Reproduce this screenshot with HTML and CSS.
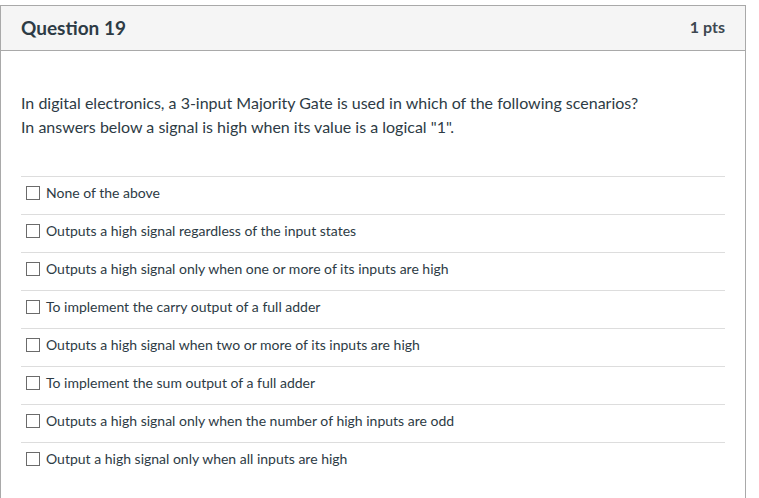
FILE: index.html
```
<!DOCTYPE html>
<html>
  <head>
    <title>Question 19</title>
    <link rel="stylesheet" href="styles.css">
  </head>
  <body>
    <div class="question">
      <div class="question-header">
        <span class="question-title">Question 19</span>
        <span class="question-points">1 pts</span>
      </div>
      <div class="question-body">
        <div class="question-text">
          In digital electronics, a 3-input Majority Gate is used in which of the following scenarios?<br>
          In answers below a signal is high when its value is a logical "1".
        </div>
        <div class="answers">
          <label class="answer"><input type="checkbox"> None of the above</label>
          <label class="answer"><input type="checkbox"> Outputs a high signal regardless of the input states</label>
          <label class="answer"><input type="checkbox"> Outputs a high signal only when one or more of its inputs are high</label>
          <label class="answer"><input type="checkbox"> To implement the carry output of a full adder</label>
          <label class="answer"><input type="checkbox"> Outputs a high signal when two or more of its inputs are high</label>
          <label class="answer"><input type="checkbox"> To implement the sum output of a full adder</label>
          <label class="answer"><input type="checkbox"> Outputs a high signal only when the number of high inputs are odd</label>
          <label class="answer"><input type="checkbox"> Output a high signal only when all inputs are high</label>
        </div>
      </div>
    </div>
  </body>
</html>
```
FILE: styles.css
```
body {
  font-family: Lato, "Open Sans", sans-serif;
  color: #2d3b45;
  margin: 0;
  padding: 5px 0 0 0;
  background: #fff;
}
.question {
  width: 746px;
  box-sizing: border-box;
  border: 1px solid #a9a9a9;
  border-bottom: none;
}
.question-header {
  display: flex;
  justify-content: space-between;
  align-items: center;
  height: 42px;
  padding: 0 20px 2px 20px;
  background-color: #f5f5f5;
  border-bottom: 1px solid #a9a9a9;
}
.question-title {
  font-size: 19px;
  font-weight: bold;
}
.question-points {
  font-size: 16px;
  font-weight: bold;
  color: #3d4850;
  padding-bottom: 2px;
}
.question-body {
  padding: 40px 20px 20px 20px;
}
.question-text {
  font-size: 16px;
  line-height: 24px;
  margin-bottom: 37px;
}
.answers {
  display: flex;
  flex-direction: column;
}
.answer {
  display: flex;
  align-items: center;
  font-size: 14px;
  line-height: 20px;
  padding: 6px 0 11px 0;
  border-top: 1px solid #dddddd;
}
.answer input[type="checkbox"] {
  appearance: none;
  width: 14px;
  height: 14px;
  margin: 0 6px 0 5px;
  border: 1px solid #6b6b6b;
  background: #fff;
  box-sizing: border-box;
}
```
